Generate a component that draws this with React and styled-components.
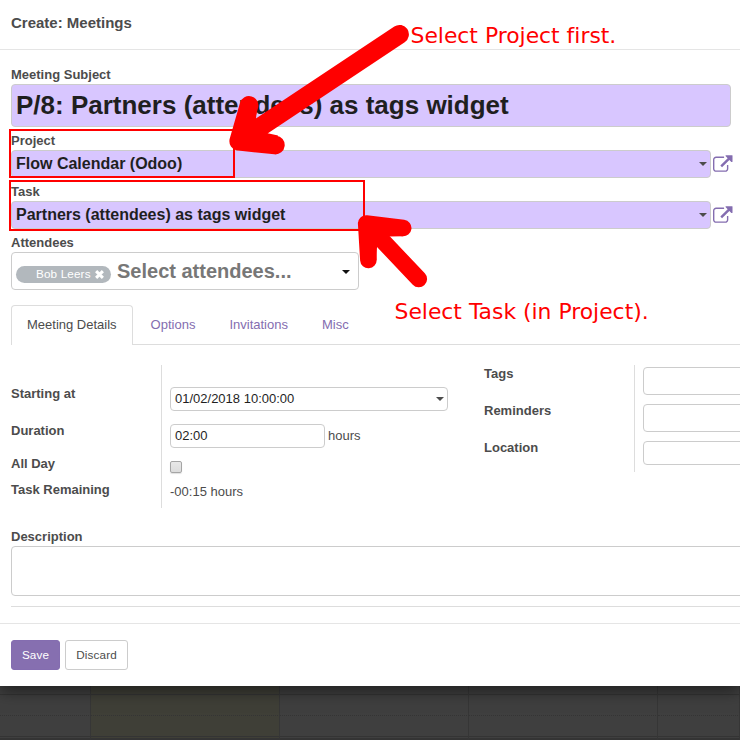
import React from "react";
import styled, { createGlobalStyle } from "styled-components";

const GlobalStyle = createGlobalStyle`
  *, *::before, *::after { box-sizing: border-box; }
  html, body { margin: 0; padding: 0; overflow: hidden; background: #3f3f3f; }
  body { font-family: "Liberation Sans", Arial, sans-serif; font-size: 13px; color: #4c4c4c; }
`;

const Screen = styled.div`
  position: relative;
  width: 740px;
  height: 740px;
  overflow: hidden;
  display: flex;
  flex-direction: column;
  background: #3f3f3f;
`;

const Modal = styled.div`
  position: relative;
  z-index: 1;
  flex: none;
  height: 686px;
  background: #fff;
  box-shadow: 0 5px 15px rgba(0, 0, 0, 0.5);
`;

const Header = styled.header`
  height: 50px;
  padding: 13px 11px 0;
  border-bottom: 1px solid #e5e5e5;
  font-size: 15px;
  font-weight: bold;
  line-height: 20px;
`;

const Body = styled.main`
  height: 573px;
  padding: 14px 0 0 11px;
`;

const Field = styled.div`
  margin-bottom: 3px;
`;

const Label = styled.label`
  display: block;
  height: 20px;
  line-height: 21px;
  font-size: 13px;
  font-weight: bold;
`;

const Control = styled.div`
  display: flex;
  align-items: center;
  justify-content: space-between;
  flex: none;
  width: ${(p) => p.$w}px;
  height: ${(p) => p.$h}px;
  padding: 0 ${(p) => p.$end || 3}px ${(p) => p.$raise || 0}px 4px;
  border: 1px solid #ccc;
  border-radius: 4px;
  background: ${(p) => (p.$required ? "#d8c6ff" : "#fff")};
  color: #1f1f1f;
  font-size: ${(p) => p.$size || 13}px;
  font-weight: ${(p) => (p.$size ? "bold" : "normal")};
  white-space: nowrap;
`;

const Caret = styled.i`
  width: 0;
  height: 0;
  margin-top: 1px;
  border: 4px solid transparent;
  border-top-color: ${(p) => p.$color || "#4c4c4c"};
  border-bottom: 0;
`;

const PickerRow = styled.div`
  display: flex;
  align-items: center;
  gap: 2px;
`;

const LinkSvg = styled.svg`
  width: 19.5px;
  height: 17px;
  margin-top: -1px;
  fill: #846db0;
`;

const TagArea = styled.div`
  display: flex;
  align-items: flex-start;
  height: 100%;
`;

const Tag = styled.span`
  display: flex;
  align-items: center;
  gap: 4px;
  width: 95px;
  height: 17px;
  margin: 13px 6px 0 0;
  padding: 0 0 2px 20px;
  border-radius: 9px;
  background: #b2b8bd;
  color: #fff;
  font-size: 11.7px;
  font-weight: normal;
  letter-spacing: 0.15px;
  line-height: 15px;
`;

const CrossSvg = styled.svg`
  width: 9px;
  height: 9px;
  margin-top: 1px;
  flex: none;
  stroke: #fff;
  stroke-width: 2.7;
`;

const Placeholder = styled.span`
  margin-top: 6px;
  line-height: 24px;
  color: #777;
`;

const Tabs = styled.nav`
  display: flex;
  height: 40px;
  margin-top: 15px;
  border-bottom: 1px solid #ddd;
`;

const Tab = styled.a`
  height: 40px;
  margin-right: 2px;
  padding: 0 15px;
  border: 1px solid ${(p) => (p.$active ? "#ddd" : "transparent")};
  border-bottom: 0;
  border-radius: 4px 4px 0 0;
  background: ${(p) => (p.$active ? "#fff" : "transparent")};
  color: ${(p) => (p.$active ? "#4c4c4c" : "#846db0")};
  line-height: 38px;
  white-space: nowrap;
`;

const Groups = styled.section`
  display: flex;
  align-items: flex-start;
  height: 161px;
  margin-top: 20px;
`;

const Group = styled.div`
  display: flex;
  width: ${(p) => p.$w}px;
  height: ${(p) => p.$h}px;
  flex: none;
`;

const LabelColumn = styled.div`
  display: flex;
  flex: none;
  flex-direction: column;
  width: 151px;
  padding-top: ${(p) => p.$top}px;
  border-right: 1px solid #ddd;
`;

const RowLabel = styled.label`
  flex: none;
  height: ${(p) => p.$h || 37}px;
  font-weight: bold;
  line-height: 18px;
`;

const ValueColumn = styled.div`
  display: flex;
  flex-direction: column;
  align-items: flex-start;
  gap: ${(p) => p.$gap}px;
  padding: ${(p) => p.$top}px 0 0 8px;
`;

const Inline = styled.div`
  display: flex;
  align-items: center;
  gap: 3px;
`;

const Unit = styled.span`
  padding-bottom: 1px;
`;

const Checkbox = styled.span`
  width: 12px;
  height: 12px;
  border: 1px solid #a5a5a5;
  border-radius: 2px;
  background: linear-gradient(#e8e8e8, #dcdcdc);
  box-shadow: 0 1px 1px rgba(0, 0, 0, 0.12);
`;

const Value = styled.span`
  margin-top: -2px;
  line-height: 15px;
`;

const Rule = styled.div`
  height: 1px;
  margin-top: 10px;
  background: #ddd;
`;

const Footer = styled.footer`
  display: flex;
  gap: 5px;
  padding: 16px 11px;
  border-top: 1px solid #e5e5e5;
`;

const Button = styled.button`
  width: ${(p) => (p.$primary ? 49 : 63)}px;
  height: 30px;
  padding: 0 0 1px;
  border: 1px solid ${(p) => (p.$primary ? "#846db0" : "#ccc")};
  border-radius: 3px;
  background: ${(p) => (p.$primary ? "#866fb0" : "#fff")};
  color: ${(p) => (p.$primary ? "#fff" : "#4c4c4c")};
  font: 11.7px "Liberation Sans", Arial, sans-serif;
  letter-spacing: 0.15px;
`;

const Calendar = styled.div`
  display: grid;
  grid-template-columns: 91px 189px 189px 189px 82px;
  grid-template-rows: 9px 21px 21px 2px 1px;
  height: 54px;
`;

const Slot = styled.div`
  background: ${(p) => (p.$today ? "#3f3f37" : "#3f3f3f")};
  border-right: 1px solid #363636;
  border-bottom: 1px ${(p) => (p.$dotted ? "dotted" : "solid")} #343434;
`;

const Outline = styled.div`
  position: absolute;
  z-index: 2;
  left: 9px;
  top: ${(p) => p.$top}px;
  width: ${(p) => p.$w}px;
  height: ${(p) => p.$h}px;
  border: 2px solid #f00;
`;

const Arrows = styled.svg`
  position: absolute;
  z-index: 3;
  inset: 0;
  fill: none;
  stroke: #f00;
  stroke-linecap: round;
  stroke-linejoin: round;
`;

const Note = styled.div`
  position: absolute;
  z-index: 3;
  left: ${(p) => p.$x}px;
  top: ${(p) => p.$y}px;
  color: #f00;
  font: 21.87px/26px "DejaVu Sans", sans-serif;
  font-variant-ligatures: none;
  white-space: nowrap;
`;

const ExternalLink = () => (
  <LinkSvg viewBox="0 0 1792 1536">
    <path d="M1408 928v320q0 119-84.5 203.5t-203.5 84.5h-832q-119 0-203.5-84.5t-84.5-203.5v-832q0-119 84.5-203.5t203.5-84.5h704q14 0 23 9t9 23v64q0 14-9 23t-23 9h-704q-66 0-113 47t-47 113v832q0 66 47 113t113 47h832q66 0 113-47t47-113v-320q0-14 9-23t23-9h64q14 0 23 9t9 23zm384-864v512q0 26-19 45t-45 19-45-19l-176-176-652 652q-10 10-23 10t-23-10l-114-114q-10-10-10-23t10-23l652-652-176-176q-19-19-19-45t19-45 45-19h512q26 0 45 19t19 45z" />
  </LinkSvg>
);

const RecordPicker = ({ label, value }) => (
  <Field>
    <Label>{label}</Label>
    <PickerRow>
      <Control $w={700} $h={28} $size={16} $required $raise={1}>
        {value}
        <Caret />
      </Control>
      <ExternalLink />
    </PickerRow>
  </Field>
);

const calendarRows = [false, true, false, false, false];

export default function App() {
  return (
    <Screen>
      <GlobalStyle />
      <Modal>
        <Header>Create: Meetings</Header>
        <Body>
          <Field>
            <Label>Meeting Subject</Label>
            <Control $w={720} $h={43} $size={26} $required>
              P/8: Partners (attendees) as tags widget
            </Control>
          </Field>
          <RecordPicker label="Project" value="Flow Calendar (Odoo)" />
          <RecordPicker label="Task" value="Partners (attendees) as tags widget" />
          <div>
            <Label>Attendees</Label>
            <Control $w={348} $h={38} $size={20} $end={8}>
              <TagArea>
                <Tag>
                  Bob Leers
                  <CrossSvg viewBox="0 0 8 8">
                    <path d="M1 1l6 6M7 1L1 7" />
                  </CrossSvg>
                </Tag>
                <Placeholder>Select attendees...</Placeholder>
              </TagArea>
              <Caret $color="#111" />
            </Control>
          </div>
          <Tabs>
            <Tab $active>Meeting Details</Tab>
            <Tab>Options</Tab>
            <Tab>Invitations</Tab>
            <Tab>Misc</Tab>
          </Tabs>
          <Groups>
            <Group $w={473} $h={143}>
              <LabelColumn $top={20}>
                <RowLabel>Starting at</RowLabel>
                <RowLabel $h={33}>Duration</RowLabel>
                <RowLabel $h={26}>All Day</RowLabel>
                <RowLabel $h={18}>Task Remaining</RowLabel>
              </LabelColumn>
              <ValueColumn $top={22} $gap={13}>
                <Control $w={278} $h={24} $raise={1}>
                  01/02/2018 10:00:00
                  <Caret />
                </Control>
                <Inline>
                  <Control $w={155} $h={24} $raise={1}>02:00</Control>
                  <Unit>hours</Unit>
                </Inline>
                <Checkbox />
                <Value>-00:15 hours</Value>
              </ValueColumn>
            </Group>
            <Group $w={360} $h={107}>
              <LabelColumn $top={0}>
                <RowLabel>Tags</RowLabel>
                <RowLabel>Reminders</RowLabel>
                <RowLabel $h={18}>Location</RowLabel>
              </LabelColumn>
              <ValueColumn $top={2} $gap={9}>
                <Control $w={278} $h={28} />
                <Control $w={278} $h={28} />
                <Control $w={278} $h={24} />
              </ValueColumn>
            </Group>
          </Groups>
          <Label>Description</Label>
          <Control $w={760} $h={50} />
          <Rule />
        </Body>
        <Footer>
          <Button $primary>Save</Button>
          <Button>Discard</Button>
        </Footer>
      </Modal>
      <Calendar>
        {calendarRows.map((dotted, row) =>
          [0, 1, 2, 3, 4].map((col) => (
            <Slot key={`${row}-${col}`} $today={col === 1} $dotted={dotted} />
          ))
        )}
      </Calendar>
      <Outline $top={129} $w={226} $h={49} />
      <Outline $top={180} $w={356} $h={51} />
      <Arrows width="740" height="740" viewBox="0 0 740 740">
        <path strokeWidth="18.8" d="M399.5 34.3L238.8 141.2M249 105.5L238.8 141.2L275.3 145" />
        <path fill="#f00" stroke="none" d="M257.5 104L256 118.5L267.7 133.3L278 135.5L275 145L239 141L249 105Z" />
        <path strokeWidth="16.6" d="M418.8 279L366.2 223.5M403.2 228L366.2 223.5L368.4 260" />
        <path fill="#f00" stroke="none" d="M403 236.3L389.3 236.5L377 247.3L376.3 260L368 260L366 223.5L403 228Z" />
      </Arrows>
      <Note $x={410.5} $y={23}>Select Project first.</Note>
      <Note $x={394.5} $y={299}>Select Task (in Project).</Note>
    </Screen>
  );
}
